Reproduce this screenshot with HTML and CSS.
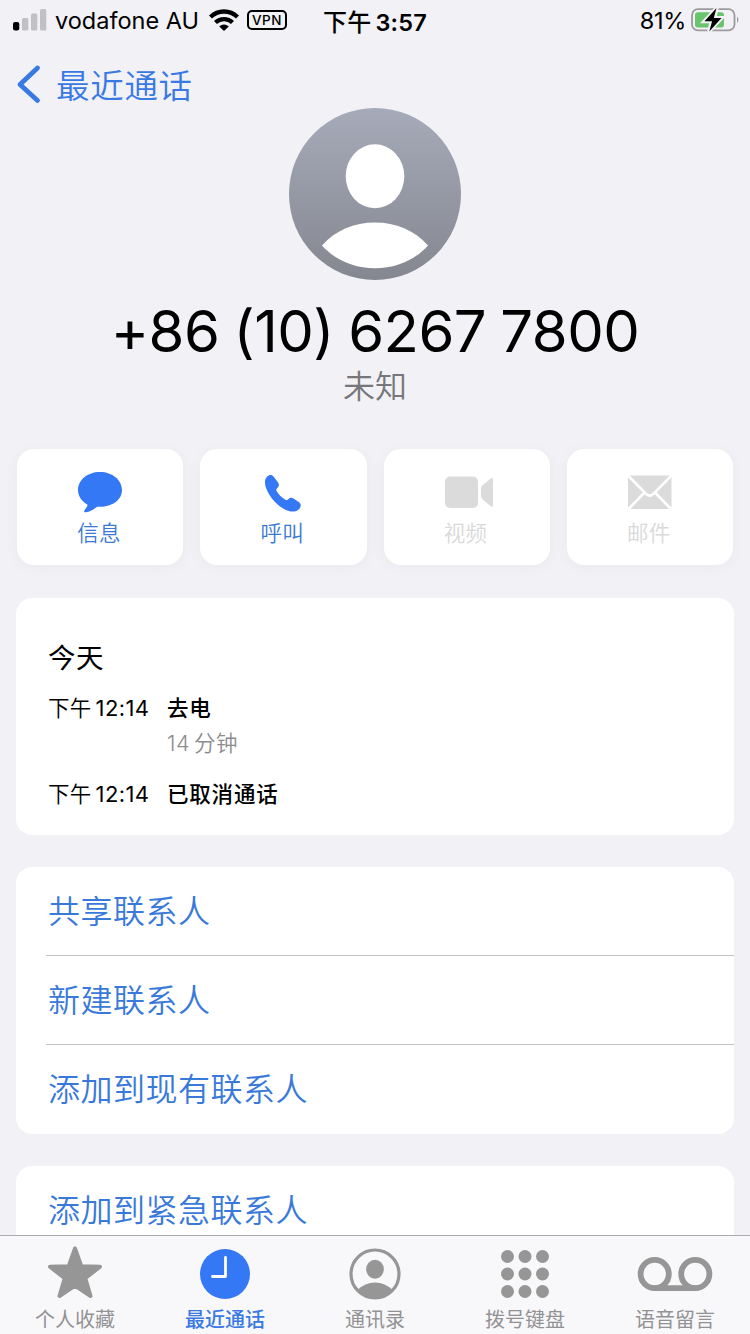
FILE: index.html
```html
<!DOCTYPE html>
<html lang="zh-CN">
<head>
<meta charset="utf-8">
<meta name="viewport" content="width=device-width">
<title>最近通话</title>
<link rel="stylesheet" href="styles.css">
</head>
<body>
<div class="phone">
  <header class="status">
    <div class="status-left">
      <svg class="signal" width="34" height="22" viewBox="0 0 34 22">
        <rect x="0" y="13" width="6.3" height="8.5" rx="2"/>
        <g fill="#c1c1c5"><rect x="9" y="9" width="6.3" height="12.5" rx="1.5"/><rect x="18" y="4.5" width="6.3" height="17" rx="1.5"/><rect x="27" y="0" width="6.3" height="21.5" rx="1.5"/></g>
      </svg>
      <span class="carrier">vodafone AU</span>
      <svg class="wifi" width="30" height="22" viewBox="0 0 30 22">
        <g fill="none" stroke="#000" stroke-width="4.300"><path d="M1.500 8a19.300 19.300 0 0 1 27 0"/><path d="M6.500 13.500a12.200 12.200 0 0 1 17 0"/></g>
        <path d="M15 22l-4.800-4.500a7 7 0 0 1 9.600 0z"/>
      </svg>
      <span class="vpn">VPN</span>
    </div>
    <div class="time">下午<span class="clock">3:57</span></div>
    <div class="status-right">
      <span class="percent">81%</span>
      <svg width="48" height="26" viewBox="0 0 48 26">
        <rect x="1" y="2.2" width="42.5" height="21.2" rx="6" fill="none" stroke="#9c9c9f" stroke-width="1.8"/>
        <path d="M46 9.5q3 3.2 0 6.5z" fill="#9c9c9f"/>
        <rect x="4" y="5.2" width="29" height="15.2" rx="3" fill="#69c46c"/>
        <path d="M25.7 1L13.5 14.3h7.3L18 24.5 30.5 11h-7.2z" stroke="#f1f1f6" stroke-width="4" fill="#f1f1f6"/>
        <path d="M25.5 1L13.5 14.3h7.6L18.3 24.5 30.5 11h-7.7z"/>
      </svg>
    </div>
  </header>

  <main class="content">
    <nav class="back">
      <svg width="24" height="40" viewBox="0 0 24 40"><path d="M21.500 4L4 20.500l17.500 16" fill="none" stroke="#3979e3" stroke-width="4.800" stroke-linecap="round" stroke-linejoin="round"/></svg>
      <span>最近通话</span>
    </nav>

    <section class="profile">
      <svg class="avatar" width="172" height="172" viewBox="0 0 172 172">
        <defs><linearGradient id="shade" x2="0" y2="1"><stop stop-color="#a6abb9"/><stop offset="1" stop-color="#858790"/></linearGradient></defs>
        <circle cx="86" cy="86" r="86" fill="url(#shade)"/>
        <ellipse cx="86" cy="68.3" rx="29.3" ry="32" fill="#fff"/>
        <path d="M33 137.500C47 122 65 114.500 86 114.500s39 7.500 53 23C126 152 107 160.300 86 160.300S46 152 33 137.500z" fill="#fff"/>
      </svg>
      <h1 class="number">+86 (10) 6267 7800</h1>
      <p class="unknown">未知</p>
    </section>

    <section class="actions">
      <button class="action">
        <svg width="50" height="44" viewBox="0 0 50 44"><path fill="#3478f6" d="M25 2C12.500 2 3 10 3 20c0 6 3.500 11 9 14.200.6.400.7 1 .3 1.700-.8 1.700-2 3-2.800 4.300-.7 1.200-.2 2.200 1.200 2 4.300-.5 7.500-2.500 10.700-4.900.8-.6 1.600-.5 3.600-.5 12.500 0 22-7 22-16.800S37.500 2 25 2z"/></svg>
        <span>信息</span>
      </button>
      <button class="action">
        <svg width="50" height="44" viewBox="0 0 50 44"><path transform="translate(.6 .7) scale(.93)" fill="#3478f6" d="M9 6.500C11.500 4.200 14.300 4 16.300 6.500l4.600 6.300c1.500 2.100 1.200 4-.7 5.700-1.400 1.300-1.600 2.200-.7 3.600 2.400 3.800 5.200 6.600 8.900 9 1.500 1 2.600.8 3.800-.6 1.500-1.800 3.300-2 5.300-.7l6 4c2.300 1.600 2.400 4.500.4 7-3.700 4.200-10 4.300-17.400-.2C19.500 36.500 13.500 29.800 9.500 22 6.300 15.700 5.800 9.800 9 6.500z"/></svg>
        <span>呼叫</span>
      </button>
      <button class="action off">
        <svg width="50" height="44" viewBox="0 0 50 44" fill="#dbdbdb"><rect x="3" y="6.500" width="33" height="31.500" rx="5"/><path d="M39 18.500q0-2 1.500-3.300l8-6.500q2.500-1.700 2.500 1v25.500q0 2.500-2.500.8l-8-6.800Q39 28 39 26z"/></svg>
        <span>视频</span>
      </button>
      <button class="action off">
        <svg width="50" height="44" viewBox="0 0 50 44"><rect x="3" y="5.500" width="43.500" height="33.500" rx="2" fill="#dbdbdb"/><path d="M3.500 6l17.500 17.800q3.700 3.700 7.400 0L46 6M3.500 39l16-16.500M46 39L30 22.500" fill="none" stroke="#fff" stroke-width="2.600"/></svg>
        <span>邮件</span>
      </button>
    </section>

    <section class="card history">
      <h2>今天</h2>
      <div class="call"><span class="when">下午<i>12:14</i></span><span class="what">去电</span></div>
      <p class="duration"><i>14</i>分钟</p>
      <div class="call"><span class="when">下午<i>12:14</i></span><span class="what">已取消通话</span></div>
    </section>

    <section class="card links">
      <a>共享联系人</a><a>新建联系人</a><a>添加到现有联系人</a>
    </section>
    <section class="card links">
      <a>添加到紧急联系人</a>
    </section>
  </main>

  <footer class="tabs">
    <div class="tab">
      <svg width="80" height="56" viewBox="0 0 80 56"><path d="M40 4.500l6.300 17.700 18.700.5-14.700 11.600L55.500 52 40 41.500 24.500 52l5.200-17.700L15 22.700l18.700-.5z" fill="#969696" stroke="#969696" stroke-width="4" stroke-linejoin="round"/></svg>
      <span>个人收藏</span>
    </div>
    <div class="tab on">
      <svg width="80" height="56" viewBox="0 0 80 56"><circle cx="40" cy="30" r="25" fill="#3478f6"/><path d="M40.500 13.500V32.500H27.500" fill="none" stroke="#fff" stroke-width="2.800" stroke-linecap="round" stroke-linejoin="round"/></svg>
      <span>最近通话</span>
    </div>
    <div class="tab">
      <svg width="80" height="56" viewBox="0 0 80 56"><circle cx="40" cy="30" r="24" fill="none" stroke="#969696" stroke-width="3.200"/><ellipse cx="40" cy="25.300" rx="8.800" ry="9.500" fill="#969696"/><path d="M22.500 46q7.500-7.500 17.500-7.500T57.500 46q-7 8.500-17.500 8.500T22.500 46z" fill="#969696"/></svg>
      <span>通讯录</span>
    </div>
    <div class="tab">
      <svg width="80" height="56" viewBox="0 0 80 56" fill="#969696"><circle cx="22.500" cy="12.500" r="6.500"/><circle cx="40" cy="12.500" r="6.500"/><circle cx="57.500" cy="12.500" r="6.500"/><circle cx="22.500" cy="30" r="6.500"/><circle cx="40" cy="30" r="6.500"/><circle cx="57.500" cy="30" r="6.500"/><circle cx="22.500" cy="47.500" r="6.500"/><circle cx="40" cy="47.500" r="6.500"/><circle cx="57.500" cy="47.500" r="6.500"/></svg>
      <span>拨号键盘</span>
    </div>
    <div class="tab">
      <svg width="80" height="56" viewBox="0 0 80 56"><g fill="none" stroke="#969696" stroke-width="5.800"><circle cx="19.700" cy="30" r="14.100"/><circle cx="60.300" cy="30" r="14.100"/><path d="M19.700 44.100h40.600"/></g></svg>
      <span>语音留言</span>
    </div>
  </footer>
</div>
</body>
</html>
```

FILE: styles.css
```css
* { box-sizing: border-box; margin: 0; padding: 0; }
body { background: #f1f1f6; font-family: Inter, "Noto Sans CJK SC", sans-serif; color: #000; }
i { font-style: normal; }
svg { display: block; flex: none; overflow: visible; }
.phone { width: 750px; height: 1334px; display: flex; flex-direction: column; overflow: hidden; }

.status { height: 40px; flex: none; display: grid; grid-template-columns: 1fr auto 1fr; align-items: center; padding: 0 11px 0 13px; font-size: 23.5px; white-space: nowrap; }
.status-left, .status-right { display: flex; align-items: center; }
.status-left svg { margin-top: -1px; }
.status-right { justify-content: flex-end; }
.carrier { width: 154px; padding-left: 8px; letter-spacing: 0; }
.wifi { margin-left: 8px; }
.vpn { width: 40px; height: 20px; margin-left: 8px; border: 2px solid #000; border-radius: 5px; font-size: 13.5px; font-weight: 500; line-height: 16px; text-align: center; letter-spacing: .6px; }
.time { font-size: 24px; font-weight: 500; letter-spacing: .2px; margin-right: 2px; }
.clock { font-size: 23.5px; font-weight: 600; margin-left: 4px; }
.percent { margin-right: 5px; letter-spacing: -.3px; }

.content { flex: 1; min-height: 0; overflow: hidden; }
.back { height: 68px; display: flex; align-items: center; gap: 16px; margin: 10px 0 -10px; padding-left: 16px; color: #3979e3; font-size: 33.5px; font-weight: 350; letter-spacing: .7px; line-height: 48px; }
.back span { padding-top: 3px; }

.profile { display: flex; flex-direction: column; align-items: center; }
.number { height: 82px; margin-top: 10px; font-size: 58px; font-weight: 400; line-height: 82px; white-space: nowrap; letter-spacing: -.55px; word-spacing: -1.5px; }
.unknown { height: 48px; margin-top: -9px; font-size: 32px; font-weight: 350; line-height: 48px; color: #77777b; }

.actions { display: grid; grid-template-columns: repeat(4, 1fr); gap: 17px; padding: 0 17px; margin-top: 38px; }
.action { height: 116px; display: flex; flex-direction: column; align-items: center; padding-top: 21px; border: 0; border-radius: 17px; background: #fff; box-shadow: 0 2px 16px rgba(0, 0, 0, .04); font: 350 21.500px/32px Inter, "Noto Sans CJK SC", sans-serif; letter-spacing: .4px; color: #3979d3; }
.action span { margin: 3px 2px 0 0; }
.action.off { color: #d9d9d9; }

.card { margin: 33px 16px 0; background: #fff; border-radius: 16px; overflow: hidden; }
.history { height: 237px; padding: 39px 32px 0; font-size: 21.500px; line-height: 32px; }
.history h2 { font-size: 27.500px; font-weight: 400; line-height: 42px; margin-bottom: 13px; letter-spacing: .4px; }
.call { display: flex; height: 32px; }
.when { width: 119px; font-weight: 350; letter-spacing: .3px; }
.when i { margin-left: 4px; font-size: 22px; font-weight: 400; letter-spacing: .4px; }
.what { font-weight: 500; letter-spacing: .8px; }
.duration { margin: 3px 0 19px 119px; color: #8b8b8d; font-weight: 350; letter-spacing: .5px; }
.duration i { margin-right: 4px; }

.links { margin-top: 32px; padding-left: 30px; }
.links a { display: block; height: 89px; padding-left: 2px; color: #3979d9; font-size: 32px; font-weight: 350; line-height: 90px; letter-spacing: .5px; }
.links a:first-child { height: 88px; }
.links a:last-child { height: 90px; }
.links a + a { border-top: 1px solid #c3c3c6; }

.tabs { height: 99px; flex: none; display: grid; grid-template-columns: repeat(5, 1fr); border-top: 1px solid #a9abac; background: #f8f8fa; padding-top: 8px; }
.tab { display: flex; flex-direction: column; align-items: center; font-size: 20px; line-height: 30px; color: #929294; }
.tab span { margin-top: 5px; }
.tab.on { color: #3979e3; font-weight: 500; }
```
